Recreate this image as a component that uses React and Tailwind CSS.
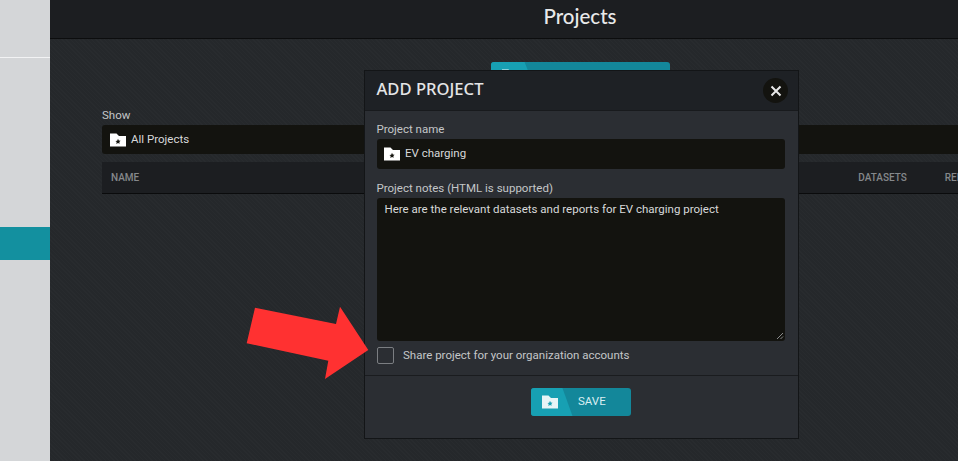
function Folder({ className = "", fg = "#ffffff", star = "#15150f" }) {
  return (
    <svg width="16" height="14" viewBox="0 0 16 14" className={className}>
      <path d="M0 0.5H6.5L9 3H16V13.5H0Z" fill={fg} />
      <path d="M8 5.8l.8 1.700 1.800.2-1.300 1.200.4 1.800L8 10l-1.700.9.400-1.800-1.300-1.200 1.800-.2z" fill={star} />
    </svg>
  );
}

const texture =
  "bg-[repeating-linear-gradient(45deg,rgba(255,255,255,0.014)_0px,rgba(255,255,255,0.014)_1px,transparent_1px,transparent_3px)]";

export default function App() {
  return (
    <div className="relative flex h-[461px] w-[958px] overflow-hidden font-['Roboto',sans-serif] bg-[#25282b]">
      <aside className="flex w-[50px] shrink-0 flex-col bg-[#d4d6d8]">
        <div className="box-content h-[57px] border-b border-[#f2f3f4]" />
        <div className="mt-[169px] h-[33px] bg-[#13909f]" />
      </aside>

      <main className={`flex w-[1060px] shrink-0 flex-col ${texture}`}>
        <header className="flex h-[39px] shrink-0 items-center justify-center border-b border-[#0c0d0e] bg-[#1c1e21] pb-[6px]">
          <h1 className="font-['Lato',sans-serif] text-[20.5px] font-medium text-[#e8e9ea]">Projects</h1>
        </header>

        <div className="flex justify-center pt-[23px]">
          <div className="relative flex h-[30px] w-[179px] overflow-hidden rounded-[3px] bg-[#13879a]">
            <div className="absolute inset-y-0 left-0 w-[46px] bg-[#17a0b3] [clip-path:polygon(0_0,74%_0,100%_100%,0_100%)]" />
            <Folder className="relative ml-[11px] mt-[7px]" />
          </div>
        </div>

        <div className="ml-[52px] mt-[14px] w-[956px]">
          <div className="text-[11.5px] leading-[18px] text-[#c4c6c8]">Show</div>
          <div className="mt-px flex h-[29px] items-center gap-[5px] rounded-[3px] bg-[#13130f] pl-[8px]">
            <Folder />
            <span className="text-[11.5px] text-[#d8d9da]">All Projects</span>
          </div>
          <div className="mt-[8px] flex h-[32px] items-center border-b border-[#0a0b0c] bg-[#1c1e21] pl-[9px] text-[10px] font-medium text-[#85888b]">
            <span>NAME</span>
            <span className="ml-[719px]">DATASETS</span>
            <span className="ml-[38px]">REPORTS</span>
          </div>
        </div>
      </main>

      <section className="absolute left-[364px] top-[70px] flex h-[369px] w-[435px] flex-col border border-[#131517] bg-[#2b2e33]">
        <div className="flex h-[40px] shrink-0 items-center justify-between border-b border-[#181a1d] bg-[#1e2125] pb-[3px] pl-[11.5px] pr-[10px]">
          <h2 className="font-['Noto_Sans',sans-serif] text-[16.6px] font-medium text-[#e4e5e6]">ADD PROJECT</h2>
          <button className="mt-[3px] flex h-[25px] w-[25px] items-center justify-center rounded-full bg-[#13130f]">
            <svg width="12" height="12" viewBox="0 0 12 12">
              <path d="M1.500 1.500L10.500 10.500M10.500 1.500L1.500 10.500" stroke="#e8e8e8" strokeWidth="2" />
            </svg>
          </button>
        </div>

        <div className="flex flex-1 flex-col pl-[11.5px] pr-[13px] pt-[9px]">
          <label className="text-[11.5px] leading-[18px] text-[#c4c6c8]">Project name</label>
          <div className="mt-px flex h-[30px] items-center gap-[5.5px] rounded-[3px] bg-[#13130f] pl-[7px]">
            <Folder />
            <span className="text-[11.5px] text-[#d8d9da]">EV charging</span>
          </div>
          <label className="mt-[10px] text-[11.5px] leading-[18px] text-[#c4c6c8]">Project notes (HTML is supported)</label>
          <div className="relative mt-px h-[143px] rounded-[3px] bg-[#13130f] px-[8px] pt-[2px] text-[11.5px] leading-[18px] text-[#d8d9da]">
            Here are the relevant datasets and reports for EV charging project
            <svg width="8" height="8" viewBox="0 0 8 8" className="absolute bottom-px right-px">
              <path d="M1 7L7 1M4.500 7L7 4.500" stroke="#8a8b8c" strokeWidth="1" />
            </svg>
          </div>
          <div className="mt-[6px] flex items-center gap-[9px]">
            <span className="h-[17px] w-[17.5px] rounded-[2px] border border-[#7b7e82]" />
            <span className="text-[11.5px] text-[#c4c6c8]">Share project for your organization accounts</span>
          </div>
        </div>

        <div className="flex h-[63px] shrink-0 justify-center border-t border-[#1a1c1f] pt-[12px]">
          <button className="relative ml-[-2px] flex h-[28px] w-[100px] items-center overflow-hidden rounded-[3px] bg-[#13879a] text-[11.5px] text-[#d9eef2]">
            <span className="absolute inset-y-0 left-0 w-[42px] bg-[#17a0b3] [clip-path:polygon(0_0,76%_0,100%_100%,0_100%)]" />
            <Folder className="relative ml-[11px]" fg="#e6f4f6" star="#17a0b3" />
            <span className="relative ml-[20.5px]">SAVE</span>
          </button>
        </div>
      </section>

      <svg width="125" height="75" viewBox="0 0 125 75" className="absolute left-[246px] top-[305px]">
        <path d="M9 2.700L90 19L94 1.700L122.300 45L79 74L82.300 55.700L0.700 38.300Z" fill="#ff3131" />
      </svg>
    </div>
  );
}
